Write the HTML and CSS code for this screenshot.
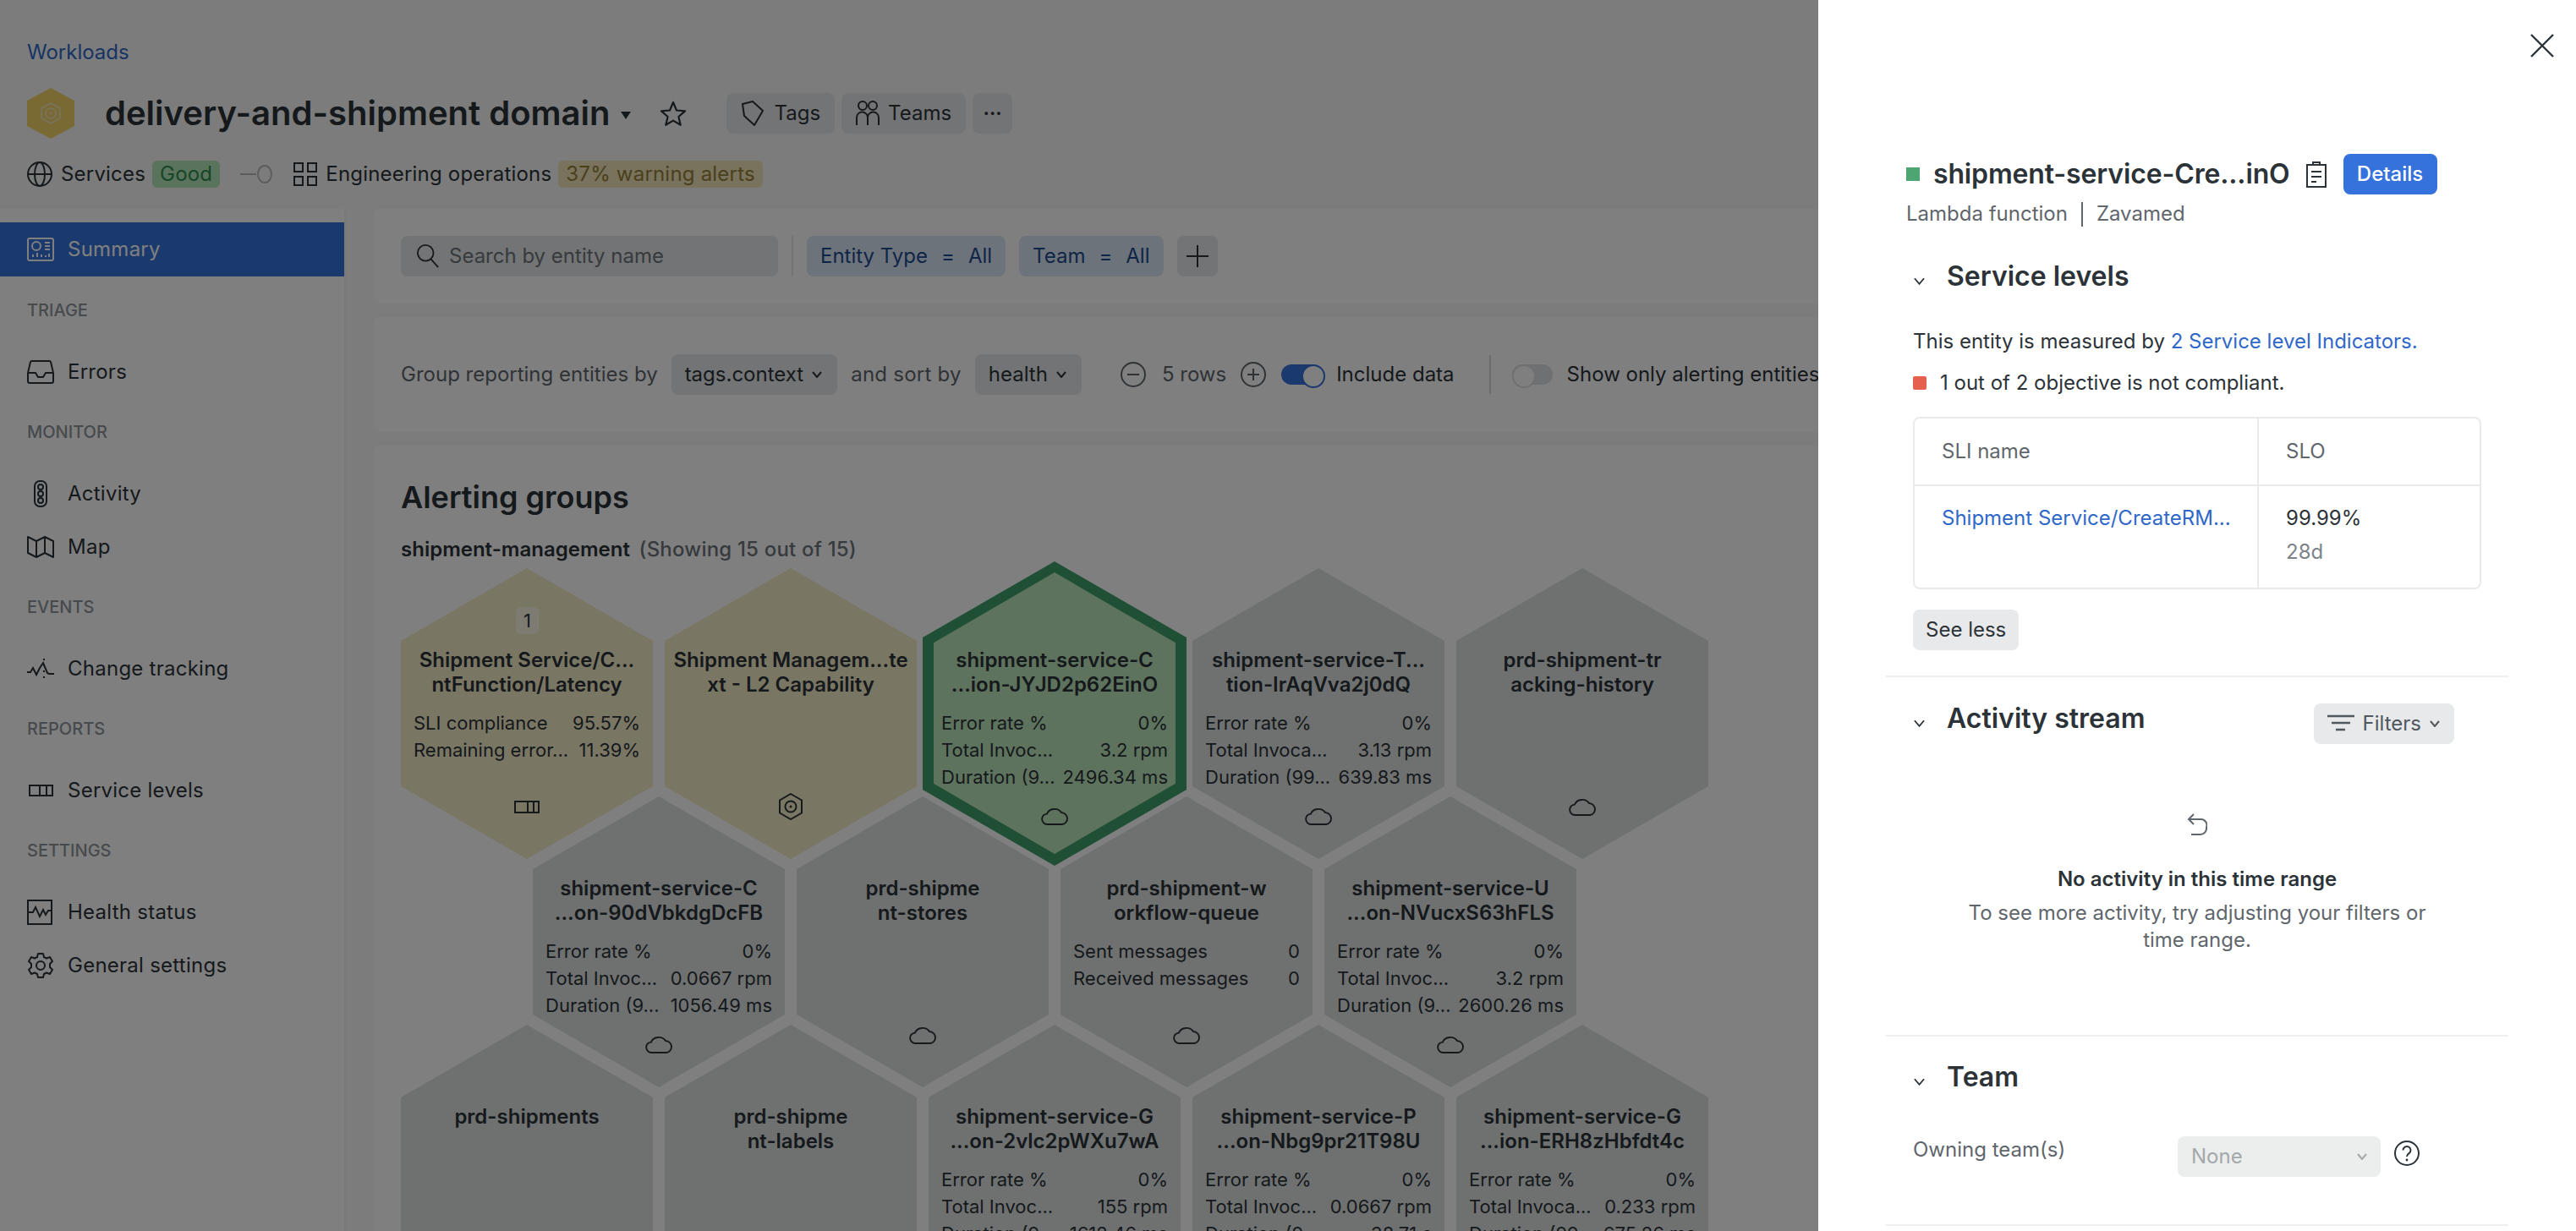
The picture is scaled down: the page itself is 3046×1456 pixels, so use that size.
FILE: index.html
```html
<!DOCTYPE html>
<html lang="en">
<head>
    <meta charset="UTF-8">
    <title>delivery-and-shipment domain</title>
    <link rel="stylesheet" href="styles.css">
</head>
<body>
    <!-- Workload header -->
    <header class="top">
        <a class="crumb">Workloads</a>
        <div class="title-row">
            <svg class="logo" viewBox="0 0 56 60"><path d="M28 0 56 15V45L28 60 0 45V15Z" fill="#f2d468"/><path d="M28 18 39 24V36L28 42 17 36V24Z" fill="none" stroke="#f2e6c4" stroke-width="1.500"/><circle cx="28" cy="30" r="6" fill="none" stroke="#f2e6c4" stroke-width="1.500"/><circle cx="28" cy="30" r="1.500" fill="#f2e6c4"/></svg>
            <h1 class="title">delivery-and-shipment domain</h1>
            <svg class="caret-solid" viewBox="0 0 14 12"><path d="M1 2h12L7 11Z"/></svg>
            <svg class="star" viewBox="0 0 32 30"><path d="M16 2l4 9.500 10 .9-7.600 6.600 2.300 9.800L16 23.600 7.300 28.800l2.300-9.800L2 12.400l10-.9Z" fill="none" stroke="currentColor" stroke-width="2.200" stroke-linejoin="round"/></svg>
            <button class="btn btn-tag">
                <svg class="ico-btn" viewBox="0 0 28 30"><path d="M2 4 14 1 26 12 16 29 4 18Z" fill="none" stroke="currentColor" stroke-width="2" stroke-linejoin="round"/></svg>
                Tags
            </button>
            <button class="btn btn-tag btn-teams">
                <svg class="ico-btn" viewBox="0 0 28 30"><ellipse cx="8" cy="6" rx="5" ry="5" fill="none" stroke="currentColor" stroke-width="2"/><ellipse cx="20" cy="6" rx="5" ry="5" fill="none" stroke="currentColor" stroke-width="2"/><path d="M1 29V20a6.500 6.500 0 0 1 13 0v9M14 20a6.500 6.500 0 0 1 13 0v9" fill="none" stroke="currentColor" stroke-width="2"/></svg>
                Teams
            </button>
            <button class="btn btn-more">···</button>
        </div>
        <div class="status-row">
            <svg class="ico" viewBox="0 0 30 30"><circle cx="15" cy="15" r="14" fill="none" stroke="currentColor" stroke-width="2"/><ellipse cx="15" cy="15" rx="6" ry="14" fill="none" stroke="currentColor" stroke-width="2"/><path d="M1 15h28" stroke="currentColor" stroke-width="2"/></svg>
            <span class="status-name">Services</span>
            <span class="pill pill-good">Good</span>
            <svg class="link-ico" viewBox="0 0 38 24"><path d="M0 12h19" stroke="currentColor" stroke-width="2"/><ellipse cx="29" cy="12" rx="8" ry="10" fill="none" stroke="currentColor" stroke-width="2"/></svg>
            <svg class="ico ico-grid" viewBox="0 0 28 28"><path d="M1 1h10v10H1zM17 1h10v10H17zM1 17h10v10H1zM17 17h10v10H17z" fill="none" stroke="currentColor" stroke-width="2"/></svg>
            <span class="status-name">Engineering operations</span>
            <span class="pill pill-warn">37% warning alerts</span>
        </div>
    </header>

    <div class="layout">
        <!-- Left navigation -->
        <nav class="side">
            <a class="nav-item active">
                <svg class="nav-ico" viewBox="0 0 32 28"><rect x="1" y="1" width="30" height="26" rx="2" fill="none" stroke="currentColor" stroke-width="2"/><circle cx="11" cy="10" r="5" fill="none" stroke="currentColor" stroke-width="2"/><path d="M21 6h6M21 10h6M21 14h6M7 23v-3M12 23v-5M17 23v-3M22 23v-2M26 23v-4" stroke="currentColor" stroke-width="2"/></svg>
                Summary
            </a>
            <div class="nav-label">TRIAGE</div>
            <a class="nav-item">
                <svg class="nav-ico" viewBox="0 0 32 28"><path d="M1 15 4 2a2 2 0 0 1 2-1h20a2 2 0 0 1 2 1l3 13M1 15v10a2 2 0 0 0 2 2h26a2 2 0 0 0 2-2V15M1 15h9l3 5h6l3-5h9" fill="none" stroke="currentColor" stroke-width="2"/></svg>
                Errors
            </a>
            <div class="nav-label">MONITOR</div>
            <a class="nav-item">
                <svg class="nav-ico" viewBox="0 0 32 32"><rect x="9" y="1" width="14" height="30" rx="6" fill="none" stroke="currentColor" stroke-width="2"/><circle cx="16" cy="8" r="3" fill="none" stroke="currentColor" stroke-width="2"/><circle cx="16" cy="16" r="3" fill="none" stroke="currentColor" stroke-width="2"/><circle cx="16" cy="24" r="3" fill="none" stroke="currentColor" stroke-width="2"/></svg>
                Activity
            </a>
            <a class="nav-item">
                <svg class="nav-ico" viewBox="0 0 32 28"><path d="M1 2 11 7 21 2 31 7V26L21 21 11 26 1 21ZM11 7V26M21 2V21" fill="none" stroke="currentColor" stroke-width="2" stroke-linejoin="round"/></svg>
                Map
            </a>
            <div class="nav-label">EVENTS</div>
            <a class="nav-item">
                <svg class="nav-ico" viewBox="0 0 32 26"><path d="M0 17h4l3-5 4 8 4-8 4-6 5 12 2 1h6" fill="none" stroke="currentColor" stroke-width="2"/><path d="M20 1v25" stroke="currentColor" stroke-width="2" stroke-dasharray="2 5"/></svg>
                Change tracking
            </a>
            <div class="nav-label">REPORTS</div>
            <a class="nav-item">
                <svg class="nav-ico" viewBox="0 0 32 14"><rect x="3" y="1" width="27" height="12" fill="none" stroke="currentColor" stroke-width="2"/><path d="M15 1v12M23 1v12" stroke="currentColor" stroke-width="2"/></svg>
                Service levels
            </a>
            <div class="nav-label">SETTINGS</div>
            <a class="nav-item">
                <svg class="nav-ico" viewBox="0 0 32 30"><rect x="1" y="1" width="28" height="28" fill="none" stroke="currentColor" stroke-width="2"/><path d="M2 15h5l3-6 5 11 4-8 3 6 3-5h3" fill="none" stroke="currentColor" stroke-width="2"/></svg>
                Health status
            </a>
            <a class="nav-item">
                <svg class="nav-ico" viewBox="0 0 32 32"><path d="M13 2h6l1 4 3 1.500 4-1.500 3 5-3 3v4l3 3-3 5-4-1.500L20 26l-1 4h-6l-1-4-3-1.500L5 26l-3-5 3-3v-4L2 11l3-5 4 1.500L12 6Z" fill="none" stroke="currentColor" stroke-width="2" stroke-linejoin="round"/><circle cx="16" cy="16" r="5" fill="none" stroke="currentColor" stroke-width="2"/></svg>
                General settings
            </a>
        </nav>

        <main class="content">
            <section class="card card-search">
                <div class="search">
                    <svg class="search-ico" viewBox="0 0 30 32"><circle cx="12" cy="12" r="10" fill="none" stroke="currentColor" stroke-width="2"/><path d="M19 20l9 10" stroke="currentColor" stroke-width="2"/></svg>
                    Search by entity name
                </div>
                <span class="search-sep"></span>
                <span class="chip">Entity Type<b>=</b>All</span>
                <span class="chip">Team<b>=</b>All</span>
                <button class="btn btn-plus"><svg viewBox="0 0 30 30"><path d="M15 2v26M2 15h26" stroke="currentColor" stroke-width="2"/></svg></button>
            </section>

            <section class="card card-controls">
                <span class="muted">Group reporting entities by</span>
                <button class="btn btn-drop">tags.context <svg class="chev" viewBox="0 0 12 8"><path d="M1 1l5 6 5-6" fill="none" stroke="currentColor" stroke-width="2"/></svg></button>
                <span class="muted and-sort">and sort by</span>
                <button class="btn btn-drop">health <svg class="chev" viewBox="0 0 12 8"><path d="M1 1l5 6 5-6" fill="none" stroke="currentColor" stroke-width="2"/></svg></button>
                <svg class="round-ico minus" viewBox="0 0 30 30"><circle cx="15" cy="15" r="14" fill="none" stroke="currentColor" stroke-width="2"/><path d="M8 15h14" stroke="currentColor" stroke-width="2"/></svg>
                <span class="muted rows">5 rows</span>
                <svg class="round-ico" viewBox="0 0 30 30"><circle cx="15" cy="15" r="14" fill="none" stroke="currentColor" stroke-width="2"/><path d="M8 15h14M15 8v14" stroke="currentColor" stroke-width="2"/></svg>
                <span class="toggle toggle-on"></span>
                <span class="toggle-text">Include data</span>
                <span class="ctrl-sep"></span>
                <span class="toggle"></span>
                <span class="toggle-text">Show only alerting entities</span>
            </section>

            <section class="card card-groups">
                <h2 class="groups-title">Alerting groups</h2>
                <p class="groups-sub"><b>shipment-management</b> <span>(Showing 15 out of 15)</span></p>

                <div class="hex-row">
                    <div class="hex hex-warn">
                        <span class="hex-count">1</span>
                        <div class="hex-name">Shipment Service/C...<br>ntFunction/Latency</div>
                        <div class="metrics">
                            <div class="metric"><span>SLI compliance</span><span>95.57%</span></div>
                            <div class="metric"><span>Remaining error...</span><span>11.39%</span></div>
                        </div>
                        <svg class="hex-ico" viewBox="0 0 30 32"><path d="M1 10h28v13H1zM16 10v13M23 10v13" fill="none" stroke="currentColor" stroke-width="2"/></svg>
                    </div>
                    <div class="hex hex-warn">
                        <div class="hex-name">Shipment Managem...te<br>xt - L2 Capability</div>
                        <div class="metrics"></div>
                        <svg class="hex-ico" viewBox="0 0 30 32"><path d="M15 1 28 8.500V23.500L15 31 2 23.500V8.500Z" fill="none" stroke="currentColor" stroke-width="2"/><circle cx="15" cy="16" r="6.500" fill="none" stroke="currentColor" stroke-width="2"/><circle cx="15" cy="16" r="1.500" fill="currentColor"/></svg>
                    </div>
                    <div class="hex hex-selected hex-three">
                        <div class="hex-name">shipment-service-C<br>...ion-JYJD2p62EinO</div>
                        <div class="metrics">
                            <div class="metric"><span>Error rate %</span><span>0%</span></div>
                            <div class="metric"><span>Total Invoc...</span><span>3.2 rpm</span></div>
                            <div class="metric"><span>Duration (9...</span><span>2496.34 ms</span></div>
                        </div>
                        <svg class="hex-ico cloud" viewBox="0 0 34 24"><path d="M8 23A6.500 6.500 0 0 1 7 10 10 9 0 0 1 25 8.500 7.300 7.300 0 0 1 26 23Z" fill="none" stroke="currentColor" stroke-width="2"/></svg>
                    </div>
                    <div class="hex hex-three">
                        <div class="hex-name">shipment-service-T...<br>tion-IrAqVva2j0dQ</div>
                        <div class="metrics">
                            <div class="metric"><span>Error rate %</span><span>0%</span></div>
                            <div class="metric"><span>Total Invoca...</span><span>3.13 rpm</span></div>
                            <div class="metric"><span>Duration (99...</span><span>639.83 ms</span></div>
                        </div>
                        <svg class="hex-ico cloud" viewBox="0 0 34 24"><path d="M8 23A6.500 6.500 0 0 1 7 10 10 9 0 0 1 25 8.500 7.300 7.300 0 0 1 26 23Z" fill="none" stroke="currentColor" stroke-width="2"/></svg>
                    </div>
                    <div class="hex">
                        <div class="hex-name">prd-shipment-tr<br>acking-history</div>
                        <div class="metrics"></div>
                        <svg class="hex-ico cloud" viewBox="0 0 34 24"><path d="M8 23A6.500 6.500 0 0 1 7 10 10 9 0 0 1 25 8.500 7.300 7.300 0 0 1 26 23Z" fill="none" stroke="currentColor" stroke-width="2"/></svg>
                    </div>
                </div>

                <div class="hex-row hex-row-shift">
                    <div class="hex hex-three">
                        <div class="hex-name">shipment-service-C<br>...on-90dVbkdgDcFB</div>
                        <div class="metrics">
                            <div class="metric"><span>Error rate %</span><span>0%</span></div>
                            <div class="metric"><span>Total Invoc...</span><span>0.0667 rpm</span></div>
                            <div class="metric"><span>Duration (9...</span><span>1056.49 ms</span></div>
                        </div>
                        <svg class="hex-ico cloud" viewBox="0 0 34 24"><path d="M8 23A6.500 6.500 0 0 1 7 10 10 9 0 0 1 25 8.500 7.300 7.300 0 0 1 26 23Z" fill="none" stroke="currentColor" stroke-width="2"/></svg>
                    </div>
                    <div class="hex">
                        <div class="hex-name">prd-shipme<br>nt-stores</div>
                        <div class="metrics"></div>
                        <svg class="hex-ico cloud" viewBox="0 0 34 24"><path d="M8 23A6.500 6.500 0 0 1 7 10 10 9 0 0 1 25 8.500 7.300 7.300 0 0 1 26 23Z" fill="none" stroke="currentColor" stroke-width="2"/></svg>
                    </div>
                    <div class="hex">
                        <div class="hex-name">prd-shipment-w<br>orkflow-queue</div>
                        <div class="metrics">
                            <div class="metric"><span>Sent messages</span><span>0</span></div>
                            <div class="metric"><span>Received messages</span><span>0</span></div>
                        </div>
                        <svg class="hex-ico cloud" viewBox="0 0 34 24"><path d="M8 23A6.500 6.500 0 0 1 7 10 10 9 0 0 1 25 8.500 7.300 7.300 0 0 1 26 23Z" fill="none" stroke="currentColor" stroke-width="2"/></svg>
                    </div>
                    <div class="hex hex-three">
                        <div class="hex-name">shipment-service-U<br>...on-NVucxS63hFLS</div>
                        <div class="metrics">
                            <div class="metric"><span>Error rate %</span><span>0%</span></div>
                            <div class="metric"><span>Total Invoc...</span><span>3.2 rpm</span></div>
                            <div class="metric"><span>Duration (9...</span><span>2600.26 ms</span></div>
                        </div>
                        <svg class="hex-ico cloud" viewBox="0 0 34 24"><path d="M8 23A6.500 6.500 0 0 1 7 10 10 9 0 0 1 25 8.500 7.300 7.300 0 0 1 26 23Z" fill="none" stroke="currentColor" stroke-width="2"/></svg>
                    </div>
                </div>

                <div class="hex-row">
                    <div class="hex">
                        <div class="hex-name">prd-shipments</div>
                    </div>
                    <div class="hex">
                        <div class="hex-name">prd-shipme<br>nt-labels</div>
                    </div>
                    <div class="hex">
                        <div class="hex-name">shipment-service-G<br>...on-2vlc2pWXu7wA</div>
                        <div class="metrics">
                            <div class="metric"><span>Error rate %</span><span>0%</span></div>
                            <div class="metric"><span>Total Invoc...</span><span>155 rpm</span></div>
                            <div class="metric"><span>Duration (9...</span><span>1612.46 ms</span></div>
                        </div>
                    </div>
                    <div class="hex">
                        <div class="hex-name">shipment-service-P<br>...on-Nbg9pr21T98U</div>
                        <div class="metrics">
                            <div class="metric"><span>Error rate %</span><span>0%</span></div>
                            <div class="metric"><span>Total Invoc...</span><span>0.0667 rpm</span></div>
                            <div class="metric"><span>Duration (9...</span><span>38.71 s</span></div>
                        </div>
                    </div>
                    <div class="hex">
                        <div class="hex-name">shipment-service-G<br>...ion-ERH8zHbfdt4c</div>
                        <div class="metrics">
                            <div class="metric"><span>Error rate %</span><span>0%</span></div>
                            <div class="metric"><span>Total Invoca...</span><span>0.233 rpm</span></div>
                            <div class="metric"><span>Duration (99...</span><span>675.26 ms</span></div>
                        </div>
                    </div>
                </div>
            </section>
        </main>
    </div>

    <div class="scrim"></div>

    <!-- Entity drawer -->
    <aside class="drawer">
        <svg class="close" viewBox="0 0 28 28"><path d="M1 1l26 26M27 1L1 27" stroke="currentColor" stroke-width="2.400"/></svg>

        <div class="entity">
            <span class="square square-green"></span>
            <h2 class="entity-name">shipment-service-Cre...inO</h2>
            <svg class="clip" viewBox="0 0 24 32"><path d="M8 5h8V2h-8zM8 5H1v26h22V5h-7M6 13h12M6 19h12M6 25h6" fill="none" stroke="currentColor" stroke-width="2"/></svg>
            <button class="btn-details">Details</button>
        </div>
        <div class="entity-sub"><span>Lambda function</span><i></i><span>Zavamed</span></div>

        <section class="block block-levels">
            <h3 class="block-head"><svg class="chev-head" viewBox="0 0 14 9"><path d="M1 1l6 7 6-7" fill="none" stroke="currentColor" stroke-width="2"/></svg>Service levels</h3>
            <p class="line line-measured">This entity is measured by <a>2 Service level Indicators.</a></p>
            <p class="line line-compliance"><span class="square square-red"></span>1 out of 2 objective is not compliant.</p>
            <table class="sli">
                <tr><th class="col-name">SLI name</th><th>SLO</th></tr>
                <tr>
                    <td class="col-name"><a>Shipment Service/CreateRM...</a></td>
                    <td>99.99%<div class="period">28d</div></td>
                </tr>
            </table>
            <button class="btn btn-see">See less</button>
        </section>

        <section class="block block-activity">
            <div class="activity-head">
                <h3 class="block-head"><svg class="chev-head" viewBox="0 0 14 9"><path d="M1 1l6 7 6-7" fill="none" stroke="currentColor" stroke-width="2"/></svg>Activity stream</h3>
                <button class="btn btn-filters">
                    <svg class="filter-ico" viewBox="0 0 32 22"><path d="M0 2h32M5 10h22M10 18h11" stroke="currentColor" stroke-width="2.400"/></svg>
                    Filters
                    <svg class="chev" viewBox="0 0 12 8"><path d="M1 1l5 6 5-6" fill="none" stroke="currentColor" stroke-width="2"/></svg>
                </button>
            </div>
            <div class="empty">
                <svg class="undo" viewBox="0 0 24 28"><path d="M8 2 2 8l6 6M2 8h14a7 7 0 0 1 7 9.500A7.500 7.500 0 0 1 16 26H5" fill="none" stroke="currentColor" stroke-width="2"/></svg>
                <div class="empty-title">No activity in this time range</div>
                <div class="empty-text">To see more activity, try adjusting your filters or<br>time range.</div>
            </div>
        </section>

        <section class="block block-team">
            <h3 class="block-head"><svg class="chev-head" viewBox="0 0 14 9"><path d="M1 1l6 7 6-7" fill="none" stroke="currentColor" stroke-width="2"/></svg>Team</h3>
            <div class="owner">
                <span class="owner-label">Owning team(s)</span>
                <div class="select">None<svg class="chev" viewBox="0 0 12 8"><path d="M1 1l5 6 5-6" fill="none" stroke="currentColor" stroke-width="2"/></svg></div>
                <svg class="help" viewBox="0 0 30 30"><circle cx="15" cy="15" r="14" fill="none" stroke="currentColor" stroke-width="2"/><path d="M10.500 11.500a4.500 4.500 0 1 1 7 3.700c-1.600 1.100-2.500 2-2.500 3.800" fill="none" stroke="currentColor" stroke-width="2"/><circle cx="15" cy="23" r="1.400" fill="currentColor"/></svg>
            </div>
        </section>
    </aside>
</body>
</html>
```

FILE: styles.css
```css
* {
    box-sizing: border-box;
}

html, body {
    height: 100%;
}

body {
    margin: 0;
    height: 1456px;
    overflow: hidden;
    background: #f6f8f7;
    color: #2c3338;
    font-family: Inter, "Liberation Sans", sans-serif;
    font-size: 24px;
    line-height: 32px;
}

button {
    font: inherit;
    color: inherit;
    border: none;
}

h1, h2, h3, p {
    margin: 0;
}

/* header */
.top {
    height: 247px;
    padding: 46px 32px 0;
}

.crumb {
    display: block;
    color: #2f68c8;
}

.title-row {
    display: flex;
    align-items: center;
    height: 60px;
    margin-top: 26px;
}

.logo {
    width: 56px;
    height: 60px;
    flex: none;
}

.title {
    margin-left: 36px;
    font-size: 40px;
    line-height: 60px;
    font-weight: 600;
    white-space: nowrap;
}

.caret-solid {
    width: 14px;
    height: 12px;
    margin: 4px 0 0 11px;
    fill: #2c3338;
}

.star {
    width: 32px;
    height: 30px;
    margin: 0 47px 0 33px;
}

.btn {
    display: inline-flex;
    align-items: center;
    height: 48px;
    background: #e7e9ea;
    border-radius: 8px;
    white-space: nowrap;
}

.btn-tag {
    padding: 0 17px;
    margin-right: 8px;
    gap: 12px;
}

.btn-teams {
    gap: 10px;
}

.btn-more {
    width: 47px;
    justify-content: center;
    font-weight: 700;
    font-size: 22px;
}

.ico {
    width: 30px;
    height: 30px;
    flex: none;
}

.ico-grid {
    width: 28px;
    height: 28px;
}

.ico-btn {
    width: 28px;
    height: 30px;
    flex: none;
}

.status-row {
    display: flex;
    align-items: center;
    height: 32px;
    margin-top: 26px;
}

.status-name {
    margin-left: 10px;
    letter-spacing: 0.2px;
    white-space: nowrap;
}

.pill {
    margin-left: 8px;
    padding: 0 9px;
    border-radius: 6px;
    letter-spacing: 0.2px;
    white-space: nowrap;
}

.pill-good {
    background: #b4e6b8;
    color: #2f8a50;
}

.pill-warn {
    background: #f2e4b8;
    color: #94803c;
}

.link-ico {
    width: 38px;
    height: 24px;
    margin: 0 25px 0 24px;
    color: #b6babc;
}

/* layout */
.layout {
    display: flex;
    height: 1209px;
}

.side {
    flex: none;
    width: 409px;
    padding-top: 16px;
    background: #fff;
    border-right: 2px solid #f0f2f1;
}

.nav-item {
    display: flex;
    align-items: center;
    height: 63px;
    padding-left: 32px;
    gap: 16px;
    letter-spacing: 0.25px;
    white-space: nowrap;
}

.nav-item.active {
    height: 64px;
    background: #3572db;
    color: #fff;
}

.nav-ico {
    width: 32px;
    height: 32px;
    flex: none;
}

.nav-label {
    height: 24px;
    margin: 28px 0 29px;
    padding-left: 32px;
    font-size: 20px;
    line-height: 24px;
    font-weight: 500;
    color: #8e9499;
}

.content {
    flex: none;
    width: 2604px;
    padding-left: 33px;
}

.card {
    background: #fff;
    border-radius: 8px 0 0 8px;
    margin-bottom: 16px;
    padding: 0 32px;
}

.card-search {
    display: flex;
    align-items: center;
    height: 112px;
}

.search {
    display: flex;
    align-items: center;
    width: 446px;
    height: 48px;
    padding-left: 18px;
    background: #e7e9ea;
    border-radius: 8px;
    color: #6e757b;
    gap: 11px;
    white-space: nowrap;
}

.search-ico {
    width: 28px;
    height: 32px;
    flex: none;
    color: #2c3338;
}

.search-sep {
    width: 2px;
    height: 48px;
    margin: 0 16px;
    background: #e7e9ea;
}

.chip {
    display: inline-flex;
    align-items: center;
    height: 48px;
    padding: 0 16px;
    margin-right: 16px;
    background: #dbe6f5;
    border-radius: 8px;
    color: #1e4a8e;
    white-space: nowrap;
}

.chip b {
    font-weight: 400;
    margin: 0 16px;
}

.btn-plus {
    width: 48px;
    justify-content: center;
    padding: 0;
}

.btn-plus svg {
    width: 30px;
    height: 30px;
}

.card-controls {
    display: flex;
    align-items: center;
    height: 136px;
    white-space: nowrap;
}

.muted {
    color: #5f666c;
}

.and-sort {
    letter-spacing: 0.25px;
}

.btn-drop {
    padding: 0 18px 0 16px;
    gap: 10px;
    margin: 0 16px;
}

.chev {
    width: 12px;
    height: 8px;
    flex: none;
}

.round-ico {
    width: 30px;
    height: 30px;
    flex: none;
    color: #5f666c;
}

.minus {
    margin-left: 30px;
}

.rows {
    margin: 0 17px 0 19px;
}

.toggle {
    position: relative;
    width: 48px;
    height: 24px;
    flex: none;
    margin-left: 18px;
    background: #dfe1e2;
    border-radius: 12px;
}

.toggle::after {
    content: "";
    position: absolute;
    left: 0;
    top: 0;
    width: 24px;
    height: 24px;
    background: #fff;
    border: 2px solid #dfe1e2;
    border-radius: 50%;
}

.toggle-on {
    background: #3572db;
}

.toggle-on::after {
    left: 24px;
    border-color: #3572db;
}

.toggle-text {
    margin-left: 17px;
}

.ctrl-sep {
    width: 2px;
    height: 46px;
    margin: 0 7px 0 41px;
    background: #d5d8da;
}

.groups-title {
    padding-top: 41px;
    font-size: 36px;
    line-height: 40px;
    font-weight: 600;
}

.groups-sub {
    margin-top: 26px;
    white-space: nowrap;
}

.groups-sub b {
    font-weight: 600;
}

.groups-sub span {
    margin-left: 4px;
    color: #6e757b;
    font-weight: 500;
    letter-spacing: 0.2px;
}

/* hex map */
.hex-row {
    display: flex;
    gap: 14px;
    margin-top: -74px;
}

.groups-sub + .hex-row {
    margin-top: 6px;
}

.hex-row-shift {
    padding-left: 156px;
}

.hex {
    position: relative;
    isolation: isolate;
    flex: none;
    display: flex;
    flex-direction: column;
    align-items: center;
    width: 298px;
    height: 344px;
    padding: 94px 15px 0;
    font-size: 22px;
}

.hex::before {
    content: "";
    position: absolute;
    inset: 0;
    z-index: -1;
    background: #dde2e0;
    clip-path: polygon(50% 0, 100% 25%, 100% 75%, 50% 100%, 0 75%, 0 25%);
}

.hex-warn::before {
    background: #f4ecc8;
}

.hex-selected::before {
    inset: 5px 6px 6px;
    background: #bce6bc;
}

.hex-selected::after {
    content: "";
    position: absolute;
    inset: -8px -7px;
    z-index: -2;
    background: #3f9e68;
    clip-path: polygon(50% 0, 100% 25%, 100% 75%, 50% 100%, 0 75%, 0 25%);
}

.hex-count {
    position: absolute;
    top: 46px;
    left: 136px;
    width: 27px;
    height: 32px;
    background: #fdf8e4;
    border-radius: 6px;
    text-align: center;
}

.hex-name {
    height: 60px;
    font-size: 24px;
    line-height: 29px;
    font-weight: 600;
    text-align: center;
    white-space: nowrap;
}

.metrics {
    width: 268px;
    height: 112px;
    padding-top: 13px;
}

.metric {
    display: flex;
    justify-content: space-between;
    height: 32px;
    line-height: 32px;
    white-space: nowrap;
}

.hex-ico {
    flex: none;
    width: 30px;
    height: 32px;
}

.hex-three .hex-ico {
    margin-top: 11px;
}

.cloud {
    width: 33px;
    height: 23px;
    margin-top: 4px;
}

.hex-three .cloud {
    margin-top: 15px;
}

/* scrim and drawer */
.scrim {
    position: fixed;
    inset: 0 896px 0 0;
    z-index: 10;
    background: rgba(0, 0, 0, 0.5);
}

.drawer {
    position: fixed;
    top: 0;
    right: 0;
    bottom: 0;
    z-index: 11;
    width: 896px;
    padding: 182px 80px 0;
    background: #fff;
    overflow: hidden;
}

.close {
    position: absolute;
    top: 40px;
    right: 26px;
    width: 28px;
    height: 28px;
}

.entity {
    display: flex;
    align-items: center;
    height: 48px;
    padding-left: 24px;
}

.square {
    display: inline-block;
    width: 16px;
    height: 16px;
    flex: none;
}

.square-green {
    background: #4da672;
}

.square-red {
    border-radius: 2px;
    background: #e5604f;
}

.entity-name {
    margin-left: 16px;
    font-size: 32px;
    line-height: 48px;
    font-weight: 600;
    letter-spacing: -0.15px;
    white-space: nowrap;
}

.clip {
    width: 24px;
    height: 32px;
    margin: 0 20px 0 19px;
    flex: none;
}

.btn-details {
    width: 111px;
    height: 48px;
    background: #3572db;
    border-radius: 8px;
    color: #fff;
    font-weight: 500;
}

.entity-sub {
    display: flex;
    align-items: center;
    height: 32px;
    margin-top: 7px;
    padding-left: 24px;
    color: #5f666c;
}

.entity-sub i {
    width: 2px;
    height: 29px;
    margin: 0 16px;
    background: #5f666c;
}

.block {
    border-bottom: 2px solid #eceeef;
    padding-left: 32px;
}

.block-head {
    position: relative;
    padding-left: 40px;
    font-size: 32px;
    line-height: 40px;
    font-weight: 600;
}

.chev-head {
    position: absolute;
    left: 1px;
    top: 21px;
    width: 13px;
    height: 9px;
}

.block-levels {
    height: 532px;
    padding-top: 38px;
}

.line {
    white-space: nowrap;
}

.line a,
.col-name a {
    color: #2f68c8;
}

.line-measured {
    margin-top: 41px;
}

.line-compliance {
    display: flex;
    align-items: center;
    gap: 16px;
    margin-top: 17px;
}

.sli {
    width: 672px;
    height: 204px;
    margin-top: 24px;
    border: 2px solid #e8eaeb;
    border-radius: 8px;
    border-spacing: 0;
    font-size: 24px;
}

.sli th {
    height: 80px;
    padding: 0 32px;
    border-bottom: 2px solid #e8eaeb;
    font-weight: 400;
    text-align: left;
    color: #5f666c;
}

.sli td {
    height: 120px;
    padding: 22px 32px 0;
    vertical-align: top;
}

.sli .col-name {
    width: 407px;
    padding-left: 32px;
    padding-right: 0;
    border-right: 2px solid #e8eaeb;
    white-space: nowrap;
}

.period {
    margin-top: 8px;
    color: #7c8389;
}

.btn-see {
    display: flex;
    margin-top: 24px;
    padding: 0 15px;
}

.block-activity {
    height: 425px;
    padding-top: 29px;
}

.activity-head {
    display: flex;
    align-items: flex-start;
    justify-content: space-between;
    padding-right: 64px;
}

.btn-filters {
    gap: 10px;
    padding: 0 17px 0 16px;
    margin-top: 2px;
    color: #50575d;
}

.filter-ico {
    width: 32px;
    height: 22px;
}

.empty {
    margin-top: 81px;
    padding-right: 32px;
    text-align: center;
}

.undo {
    display: block;
    width: 24px;
    height: 28px;
    margin: 0 auto;
    color: #5f666c;
}

.empty-title {
    margin-top: 35px;
    font-weight: 600;
}

.empty-text {
    margin-top: 8px;
    color: #5f666c;
}

.block-team {
    height: 224px;
    padding-top: 28px;
}

.owner {
    display: flex;
    align-items: flex-start;
    margin-top: 50px;
}

.owner-label {
    width: 313px;
    color: #5f666c;
}

.select {
    display: flex;
    align-items: center;
    justify-content: space-between;
    width: 240px;
    height: 48px;
    padding: 0 16px;
    background: #eceeee;
    border-radius: 8px;
    color: #a4a8ab;
}

.help {
    width: 30px;
    height: 30px;
    margin: 5px 0 0 16px;
}
```
